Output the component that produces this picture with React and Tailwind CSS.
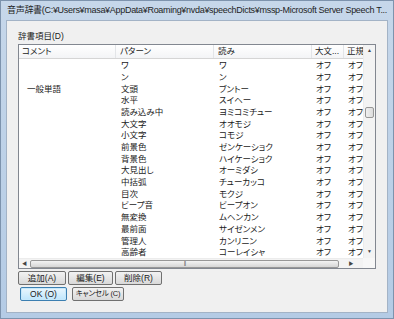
import React from 'react';

const rows = [
  { comment: '', pattern: 'ワ', reading: 'ワ' },
  { comment: '', pattern: 'ン', reading: 'ン' },
  { comment: '一般単語', pattern: '文頭', reading: 'ブントー' },
  { comment: '', pattern: '水平', reading: 'スイヘー' },
  { comment: '', pattern: '読み込み中', reading: 'ヨミコミチュー' },
  { comment: '', pattern: '大文字', reading: 'オオモジ' },
  { comment: '', pattern: '小文字', reading: 'コモジ' },
  { comment: '', pattern: '前景色', reading: 'ゼンケーショク' },
  { comment: '', pattern: '背景色', reading: 'ハイケーショク' },
  { comment: '', pattern: '大見出し', reading: 'オーミダシ' },
  { comment: '', pattern: '中括弧', reading: 'チューカッコ' },
  { comment: '', pattern: '目次', reading: 'モクジ' },
  { comment: '', pattern: 'ビープ音', reading: 'ビープオン' },
  { comment: '', pattern: '無変換', reading: 'ムヘンカン' },
  { comment: '', pattern: '最前面', reading: 'サイゼンメン' },
  { comment: '', pattern: '管理人', reading: 'カンリニン' },
  { comment: '', pattern: '高齢者', reading: 'コーレイシャ' },
];

const font = "font-['Liberation_Sans','Noto_Sans_CJK_JP',sans-serif] [font-feature-settings:'palt']";

const Btn = ({ children, className = '', primary = false }) => (
  <button
    className={`h-[14px] flex items-center justify-center whitespace-nowrap rounded-[2px] leading-none text-[#1a1a1a] ${
      primary
        ? 'border border-[#3c7fb1] bg-gradient-to-b from-[#eaf6fd] to-[#bee6fd] shadow-[inset_0_0_0_1px_#c6e8fb]'
        : 'border border-[#707070] bg-gradient-to-b from-[#f2f2f2] to-[#d9d9d9]'
    } ${className}`}
  >
    {children}
  </button>
);

const App = () => {
  return (
    <div className={`w-[394px] h-[319px] flex flex-col bg-gradient-to-b from-[#c6d7ea] to-[#b4cbe5] border border-[#7d93ad] ${font}`}>
      {/* title bar */}
      <div className="h-[19px] flex items-center pl-[6px] pr-[6px] text-[9px] text-[#1e1e1e] whitespace-nowrap tracking-[-0.3px]">
        音声辞書(C:¥Users¥masa¥AppData¥Roaming¥nvda¥speechDicts¥mssp-Microsoft Server Speech T...
      </div>

      {/* client */}
      <div className="flex-1 mx-[5px] mb-[5px] bg-[#f0f0f0] border border-[#a3b3c6] flex flex-col pl-[11px] pr-[12px]">
        <div className="h-[23px] flex items-end pb-[1px] text-[8.5px] text-[#1a1a1a]">辞書項目(D)</div>

        {/* list view */}
        <div className="w-[358px] h-[225px] border border-[#828790] bg-white flex flex-col">
          <div className="flex flex-1 min-h-0">
            <div className="flex-1 flex flex-col overflow-hidden">
              {/* header */}
              <div className="h-[14px] flex text-[8.5px] text-[#1a1a1a] bg-gradient-to-b from-[#ffffff] to-[#f3f4f6] border-b border-[#d5d5d5]">
                <div className="w-[97px] pl-[3px] flex items-center border-r border-[#e3e5e8]">コメント</div>
                <div className="w-[98px] pl-[4px] flex items-center border-r border-[#e3e5e8]">パターン</div>
                <div className="w-[98px] pl-[4px] flex items-center border-r border-[#e3e5e8]">読み</div>
                <div className="w-[32px] pl-[3px] flex items-center border-r border-[#e3e5e8]">大文...</div>
                <div className="flex-1 pl-[3px] flex items-center overflow-hidden whitespace-nowrap">正規</div>
              </div>
              {/* rows */}
              <div className="pt-[1px] text-[8.5px] text-[#1a1a1a]">
                {rows.map((r, i) => (
                  <div key={i} className="h-[11.7px] flex items-center whitespace-nowrap">
                    <div className="w-[97px] pl-[8px]">{r.comment}</div>
                    <div className="w-[98px] pl-[5px]">{r.pattern}</div>
                    <div className="w-[98px] pl-[5px]">{r.reading}</div>
                    <div className="w-[32px] pl-[4px]">オフ</div>
                    <div className="flex-1 pl-[4px]">オフ</div>
                  </div>
                ))}
              </div>
            </div>
            {/* vertical scrollbar */}
            <div className="w-[12px] bg-[#f3f3f3] border-l border-[#ececec] flex flex-col items-center">
              <div className="h-[12px] flex items-center justify-center text-[5px] text-[#444]">▲</div>
              <div className="h-[50px]" />
              <div className="w-[9px] h-[11px] border border-[#979797] rounded-[2px] bg-gradient-to-r from-[#f0f0f0] to-[#dcdcdc]" />
              <div className="flex-1" />
              <div className="h-[12px] flex items-center justify-center text-[5px] text-[#444]">▼</div>
            </div>
          </div>
          {/* horizontal scrollbar */}
          <div className="h-[10px] flex">
            <div className="flex-1 bg-[#f3f3f3] border-t border-[#ececec] flex items-center">
              <div className="w-[11px] flex items-center justify-center text-[5px] text-[#444]">◀</div>
              <div className="w-[309px] h-[8px] border border-[#979797] rounded-[2px] bg-gradient-to-b from-[#f3f3f3] to-[#d6d6d6] flex items-center justify-center text-[5px] text-[#666] tracking-[-1px]">
                |||
              </div>
              <div className="flex-1 flex items-center justify-center text-[5px] text-[#444]">▶</div>
            </div>
            <div className="w-[12px] bg-[#f7f7f7]" />
          </div>
        </div>

        {/* button rows */}
        <div className="flex gap-[2px] mt-[2px]">
          <Btn className="w-[48px] text-[8.5px]">追加(A)</Btn>
          <Btn className="w-[45px] text-[8.5px]">編集(E)</Btn>
          <Btn className="w-[47px] text-[8.5px]">削除(R)</Btn>
        </div>
        <div className="flex gap-[5px] mt-[2px] pl-[2px]">
          <Btn primary className="w-[47px] text-[8.5px]">OK (O)</Btn>
          <Btn className="w-[52px] text-[7.5px] tracking-[-0.2px]">キャンセル (C)</Btn>
        </div>
      </div>
    </div>
  );
};

export default App;
